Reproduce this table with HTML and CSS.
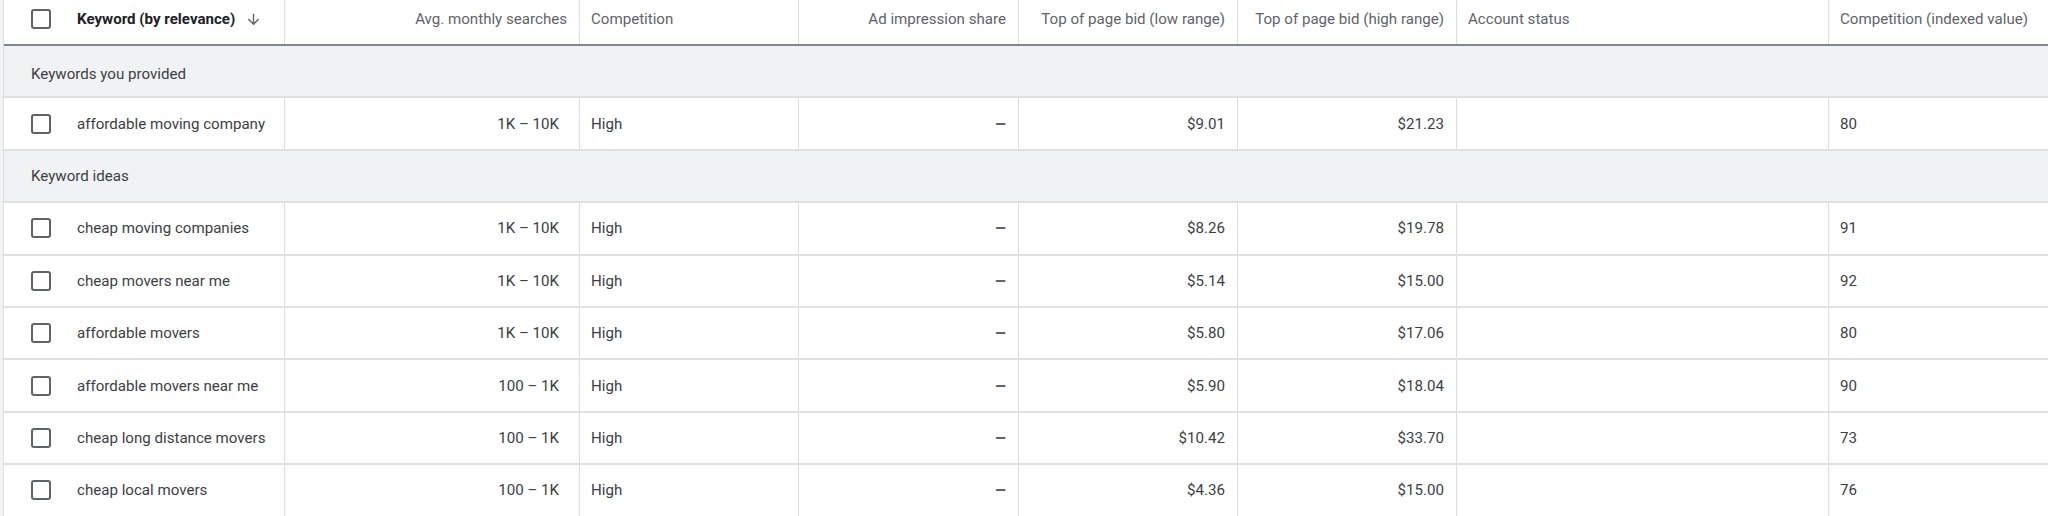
FILE: index.html
```html
<!DOCTYPE html>
<html>
<head>
<meta charset="utf-8">
<link rel="stylesheet" href="styles.css">
</head>
<body>
<div class="table">
  <div class="row head">
    <div class="cell c1"><span class="cb"></span><span class="kwh">Keyword (by relevance)</span><svg class="arrow" viewBox="0 0 24 24" width="17" height="17"><path d="M20 12l-1.41-1.41L13 16.17V4h-2v12.17l-5.58-5.59L4 12l8 8 8-8z" fill="#5f6368"/></svg></div>
    <div class="cell c2 r">Avg. monthly searches</div>
    <div class="cell c3">Competition</div>
    <div class="cell c4 r">Ad impression share</div>
    <div class="cell c5 r">Top of page bid (low range)</div>
    <div class="cell c6 r">Top of page bid (high range)</div>
    <div class="cell c7">Account status</div>
    <div class="cell c8">Competition (indexed value)</div>
  </div>

  <div class="row group first"><div class="gtext">Keywords you provided</div></div>
  <div class="row data">
    <div class="cell c1"><span class="cb"></span><span class="kw">affordable moving company</span></div>
    <div class="cell c2 r dpad2">1K – 10K</div>
    <div class="cell c3">High</div>
    <div class="cell c4 r"><span class="dash">–</span></div>
    <div class="cell c5 r">$9.01</div>
    <div class="cell c6 r">$21.23</div>
    <div class="cell c7"></div>
    <div class="cell c8">80</div>
  </div>

  <div class="row group"><div class="gtext">Keyword ideas</div></div>
  <div class="row data">
    <div class="cell c1"><span class="cb"></span><span class="kw">cheap moving companies</span></div>
    <div class="cell c2 r dpad2">1K – 10K</div>
    <div class="cell c3">High</div>
    <div class="cell c4 r"><span class="dash">–</span></div>
    <div class="cell c5 r">$8.26</div>
    <div class="cell c6 r">$19.78</div>
    <div class="cell c7"></div>
    <div class="cell c8">91</div>
  </div>
  <div class="row data">
    <div class="cell c1"><span class="cb"></span><span class="kw">cheap movers near me</span></div>
    <div class="cell c2 r dpad2">1K – 10K</div>
    <div class="cell c3">High</div>
    <div class="cell c4 r"><span class="dash">–</span></div>
    <div class="cell c5 r">$5.14</div>
    <div class="cell c6 r">$15.00</div>
    <div class="cell c7"></div>
    <div class="cell c8">92</div>
  </div>
  <div class="row data">
    <div class="cell c1"><span class="cb"></span><span class="kw">affordable movers</span></div>
    <div class="cell c2 r dpad2">1K – 10K</div>
    <div class="cell c3">High</div>
    <div class="cell c4 r"><span class="dash">–</span></div>
    <div class="cell c5 r">$5.80</div>
    <div class="cell c6 r">$17.06</div>
    <div class="cell c7"></div>
    <div class="cell c8">80</div>
  </div>
  <div class="row data">
    <div class="cell c1"><span class="cb"></span><span class="kw">affordable movers near me</span></div>
    <div class="cell c2 r dpad2">100 – 1K</div>
    <div class="cell c3">High</div>
    <div class="cell c4 r"><span class="dash">–</span></div>
    <div class="cell c5 r">$5.90</div>
    <div class="cell c6 r">$18.04</div>
    <div class="cell c7"></div>
    <div class="cell c8">90</div>
  </div>
  <div class="row data">
    <div class="cell c1"><span class="cb"></span><span class="kw">cheap long distance movers</span></div>
    <div class="cell c2 r dpad2">100 – 1K</div>
    <div class="cell c3">High</div>
    <div class="cell c4 r"><span class="dash">–</span></div>
    <div class="cell c5 r">$10.42</div>
    <div class="cell c6 r">$33.70</div>
    <div class="cell c7"></div>
    <div class="cell c8">73</div>
  </div>
  <div class="row data">
    <div class="cell c1"><span class="cb"></span><span class="kw">cheap local movers</span></div>
    <div class="cell c2 r dpad2">100 – 1K</div>
    <div class="cell c3">High</div>
    <div class="cell c4 r"><span class="dash">–</span></div>
    <div class="cell c5 r">$4.36</div>
    <div class="cell c6 r">$15.00</div>
    <div class="cell c7"></div>
    <div class="cell c8">76</div>
  </div>
</div>
</body>
</html>
```

FILE: styles.css
```css
html, body {
  margin: 0;
  padding: 0;
  background: #f1f3f4;
  overflow: hidden;
}
body {
  width: 2048px;
  height: 516px;
  font-family: Roboto, "Noto Sans", sans-serif;
  font-size: 15.1px;
  color: #3c4043;
}
.table {
  margin-left: 3px;
  width: 2100px;
  border-left: 1px solid #dadce0;
  background: #fff;
}
.row {
  display: grid;
  grid-template-columns: 281px 295px 219px 220px 219px 219px 372px 280px;
  box-sizing: border-box;
}
.head {
  height: 46px;
  border-bottom: 2px solid #80868b;
  color: #5f6368;
}
.data {
  height: 52.4px;
  border-bottom: 2px solid #e0e1e4;
}
.group {
  display: flex;
  align-items: center;
  height: 52.4px;
  border-bottom: 2px solid #e0e1e4;
  background: #f1f2f4;
}
.group.first {
  padding-top: 5px;
}
.gtext {
  padding-left: 27px;
  color: #3c4043;
}
.cell {
  display: flex;
  align-items: center;
  box-sizing: border-box;
  border-right: 1px solid #dadce0;
  padding: 0 11px;
  white-space: nowrap;
  overflow: hidden;
}
.head .cell {
  padding-bottom: 6px;
}
.cell.r {
  justify-content: flex-end;
  padding-right: 12px;
}
.data .cell.dpad2 {
  padding-right: 20px;
}
.dash {
  font-size: 18px;
  font-weight: 700;
  color: #5f6368;
  line-height: 1;
}
.cell.c1 {
  padding-left: 27px;
}
.cb {
  flex: none;
  width: 20px;
  height: 20px;
  box-sizing: border-box;
  border: 2px solid #5f6368;
  border-radius: 3px;
  margin-right: 26px;
}
.kwh {
  font-weight: 700;
  color: #202124;
}
.arrow {
  margin-left: 10px;
  flex: none;
}
```
